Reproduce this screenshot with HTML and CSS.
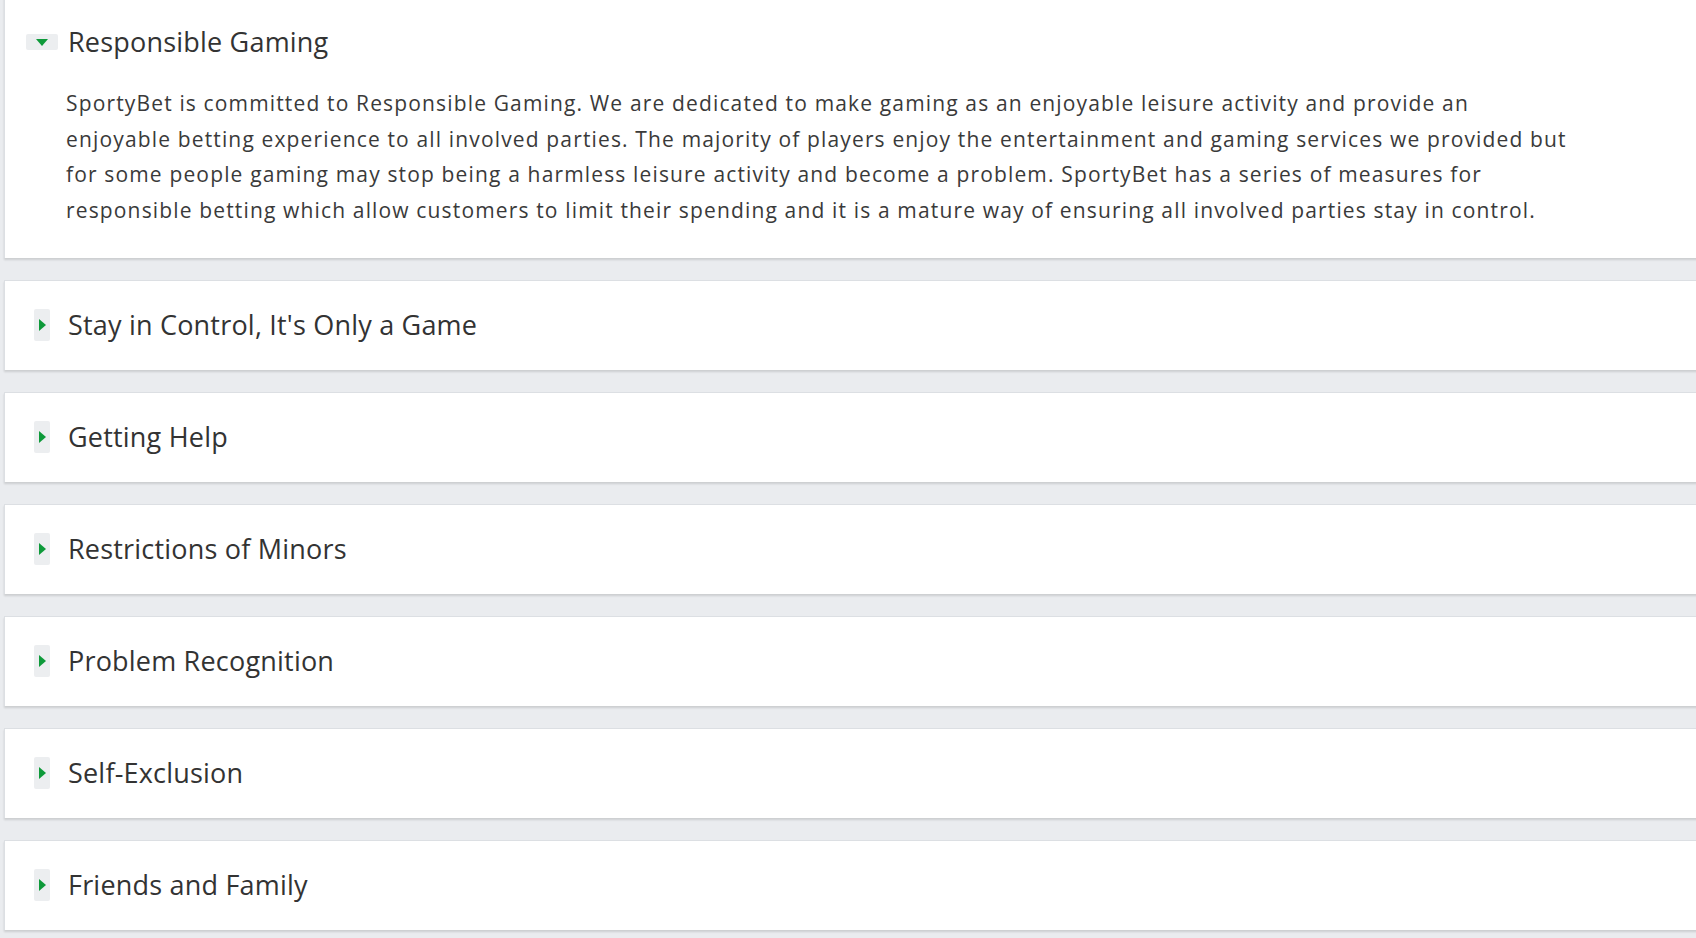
FILE: index.html
```html
<!DOCTYPE html>
<html lang="en">
<head>
    <meta charset="UTF-8">
    <meta name="viewport" content="width=device-width, initial-scale=1.0">
    <title>SportyBet - Responsible Gaming</title>
    <link rel="stylesheet" href="styles.css">
</head>
<body>
    <div class="sections">
        <div class="section open">
            <div class="section-head">
                <span class="toggle"><span class="arrow"></span></span>
                <h2>Responsible Gaming</h2>
            </div>
            <div class="section-body">
                <p>SportyBet is committed to Responsible Gaming. We are dedicated to make gaming as an enjoyable leisure activity and provide an enjoyable betting experience to all involved parties. The majority of players enjoy the entertainment and gaming services we provided but for some people gaming may stop being a harmless leisure activity and become a problem. SportyBet has a series of measures for responsible betting which allow customers to limit their spending and it is a mature way of ensuring all involved parties stay in control.</p>
            </div>
        </div>

        <div class="section">
            <div class="section-head">
                <span class="toggle"><span class="arrow"></span></span>
                <h2>Stay in Control, It's Only a Game</h2>
            </div>
        </div>

        <div class="section">
            <div class="section-head">
                <span class="toggle"><span class="arrow"></span></span>
                <h2>Getting Help</h2>
            </div>
        </div>

        <div class="section">
            <div class="section-head">
                <span class="toggle"><span class="arrow"></span></span>
                <h2>Restrictions of Minors</h2>
            </div>
        </div>

        <div class="section">
            <div class="section-head">
                <span class="toggle"><span class="arrow"></span></span>
                <h2>Problem Recognition</h2>
            </div>
        </div>

        <div class="section">
            <div class="section-head">
                <span class="toggle"><span class="arrow"></span></span>
                <h2>Self-Exclusion</h2>
            </div>
        </div>

        <div class="section">
            <div class="section-head">
                <span class="toggle"><span class="arrow"></span></span>
                <h2>Friends and Family</h2>
            </div>
        </div>
    </div>
</body>
</html>
```

FILE: styles.css
```css
* {
    box-sizing: border-box;
}
html, body {
    margin: 0;
    padding: 0;
}
body {
    font-family: 'Open Sans', 'Noto Sans', sans-serif;
    background-color: #eaecef;
    color: #333;
    overflow: hidden;
}
.sections {
    margin-top: -3px;
    margin-left: 4px;
    margin-right: -20px;
}
.section {
    background-color: #fff;
    border-top: 1px solid #dcdfe3;
    border-left: 1px solid #dcdfe3;
    box-shadow: 0 2px 2px rgba(0, 0, 0, 0.13);
    margin-bottom: 22px;
}
.section-head {
    display: flex;
    align-items: center;
    height: 89px;
    padding-left: 21px;
}
.section.open .section-head {
    height: 88px;
}
.toggle {
    display: flex;
    align-items: center;
    justify-content: center;
    width: 32px;
    height: 16px;
    background-color: #eceef0;
    border-radius: 2px;
    transform: rotate(-90deg);
    flex-shrink: 0;
}
.section.open .toggle {
    transform: none;
}
.arrow {
    width: 0;
    height: 0;
    border-left: 6px solid transparent;
    border-right: 6px solid transparent;
    border-top: 7px solid #0e9a3a;
}
h2 {
    margin: -2px 0 0 10px;
    font-size: 27px;
    font-weight: 400;
    letter-spacing: 0.2px;
    color: #333;
}
.section-body {
    padding: 0 0 29px 61px;
}
.section-body p {
    margin: 0;
    max-width: 1510px;
    font-size: 21px;
    line-height: 35.7px;
    letter-spacing: 1.15px;
    color: #3a3a3a;
}
```
